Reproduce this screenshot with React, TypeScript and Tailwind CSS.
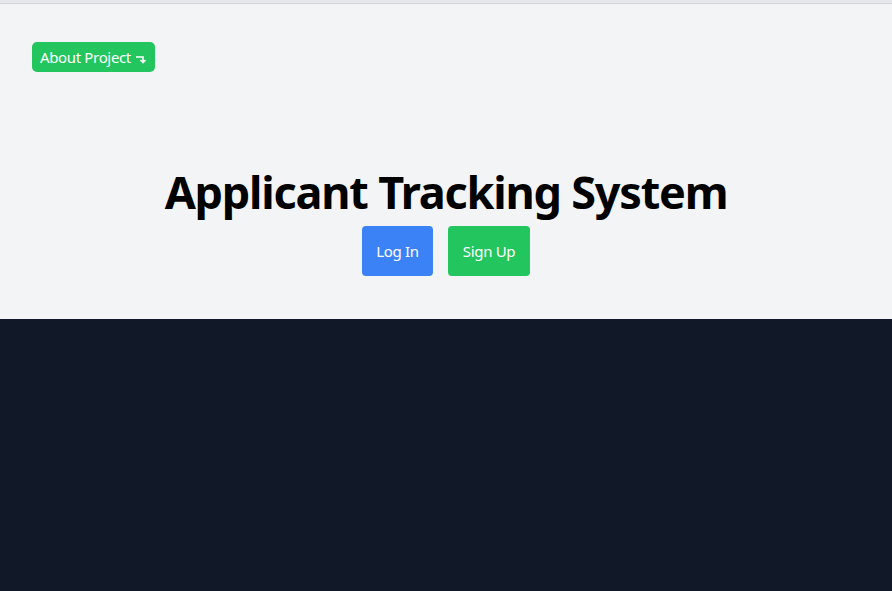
import React from "react";

const App = () => {
  return (
    <div className="min-h-screen flex flex-col bg-[#111827]" style={{ fontFamily: '"Noto Sans", "Open Sans", sans-serif' }}>
      <div className="h-[3px] bg-[#e5e7eb] border-b border-[#d1d5db] box-content" />
      <div className="bg-[#f3f4f6] h-[315px] flex flex-col">
        <div className="pl-8 pt-[38px]">
          <button className="bg-[#22c55e] text-white text-[15px] leading-none tracking-[-0.35px] rounded-[5px] pl-2 pr-2 h-[30px] flex items-center gap-1">
            About Project
            <svg width="12" height="10" viewBox="0 0 12 10" fill="none" stroke="white" strokeWidth="1.6" className="mt-1">
              <path d="M1 3h7v5" />
              <path d="M5.5 6l2.5 2.5 2.5-2.5" />
            </svg>
          </button>
        </div>
        <div className="flex flex-col items-center mt-[96px]">
          <h1 className="text-[45px] font-bold leading-[48px] text-black tracking-[-1.2px]">Applicant Tracking System</h1>
          <div className="flex gap-[15px] mt-[10px]">
            <button className="bg-[#3b82f6] text-white text-[15px] tracking-[-0.3px] rounded-[4px] w-[71px] h-[50px]">Log In</button>
            <button className="bg-[#22c55e] text-white text-[15px] tracking-[-0.3px] rounded-[4px] w-[82px] h-[50px]">Sign Up</button>
          </div>
        </div>
      </div>
    </div>
  );
};

export default App;
